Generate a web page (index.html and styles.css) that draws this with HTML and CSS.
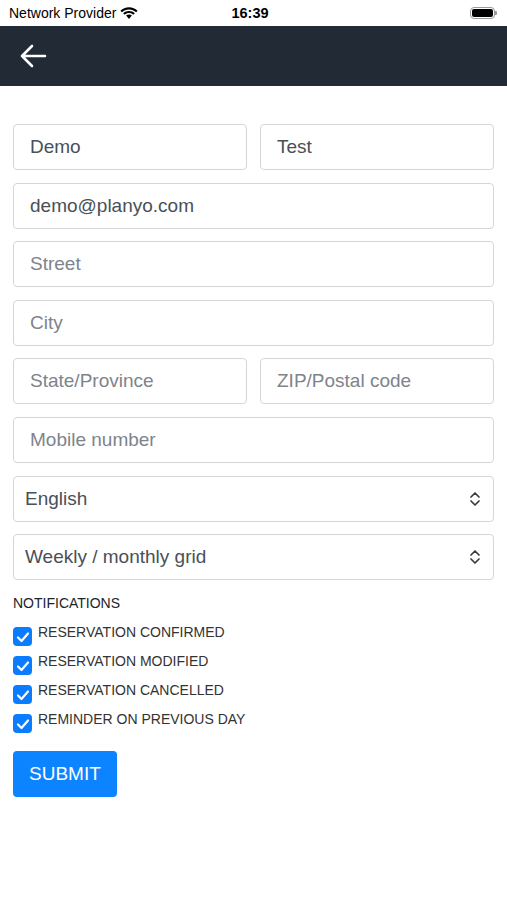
FILE: index.html
```html
<!DOCTYPE html>
<html lang="en">
<head>
    <meta charset="UTF-8">
    <meta name="viewport" content="width=device-width, initial-scale=1.0">
    <title>Profile</title>
    <link rel="stylesheet" href="styles.css">
</head>
<body>
    <div class="status-bar">
        <div class="carrier">
            Network Provider
            <svg class="wifi" width="18" height="13" viewBox="0 0 17 12">
                <path d="M8.5 2.2c2.6 0 5 1 6.8 2.7l1.3-1.4C14.5 1.4 11.6.2 8.5.2S2.5 1.4.4 3.5l1.3 1.4C3.5 3.2 5.9 2.2 8.5 2.2z" fill="#000"/>
                <path d="M8.5 5.6c1.6 0 3 .6 4.2 1.6l1.3-1.4C12.5 4.4 10.6 3.6 8.5 3.6S4.5 4.4 3 5.8l1.3 1.4c1.2-1 2.6-1.6 4.2-1.6z" fill="#000"/>
                <path d="M8.5 7c-1 0-1.9.4-2.7 1l2.7 3.2 2.7-3.2c-.8-.6-1.7-1-2.7-1z" fill="#000"/>
            </svg>
        </div>
        <div class="clock">16:39</div>
        <div class="battery">
            <span class="battery-body"><span class="battery-fill"></span></span>
            <span class="battery-tip"></span>
        </div>
    </div>

    <div class="nav-bar">
        <svg class="back" width="28" height="24" viewBox="0 0 28 24">
            <path d="M26 12H3M13 2L3 12l10 10" fill="none" stroke="#fff" stroke-width="2.6" stroke-linecap="round" stroke-linejoin="round"/>
        </svg>
    </div>

    <form class="form">
        <div class="row">
            <input class="field" type="text" value="Demo">
            <input class="field" type="text" value="Test">
        </div>
        <input class="field" type="text" value="demo@planyo.com">
        <input class="field" type="text" placeholder="Street">
        <input class="field" type="text" placeholder="City">
        <div class="row">
            <input class="field" type="text" placeholder="State/Province">
            <input class="field" type="text" placeholder="ZIP/Postal code">
        </div>
        <input class="field" type="text" placeholder="Mobile number">
        <div class="select">
            <span>English</span>
            <svg width="12" height="16" viewBox="0 0 12 16">
                <path d="M2 6l4-4 4 4M2 10l4 4 4-4" fill="none" stroke="#3a3a3a" stroke-width="1.7" stroke-linecap="round" stroke-linejoin="round"/>
            </svg>
        </div>
        <div class="select">
            <span>Weekly / monthly grid</span>
            <svg width="12" height="16" viewBox="0 0 12 16">
                <path d="M2 6l4-4 4 4M2 10l4 4 4-4" fill="none" stroke="#3a3a3a" stroke-width="1.7" stroke-linecap="round" stroke-linejoin="round"/>
            </svg>
        </div>

        <div class="section-title">NOTIFICATIONS</div>
        <label class="check"><span class="box"><svg width="14" height="12" viewBox="0 0 14 12"><path d="M2 6.5l3.5 3.5L12 2.5" fill="none" stroke="#fff" stroke-width="2.2" stroke-linecap="round" stroke-linejoin="round"/></svg></span>RESERVATION CONFIRMED</label>
        <label class="check"><span class="box"><svg width="14" height="12" viewBox="0 0 14 12"><path d="M2 6.5l3.5 3.5L12 2.5" fill="none" stroke="#fff" stroke-width="2.2" stroke-linecap="round" stroke-linejoin="round"/></svg></span>RESERVATION MODIFIED</label>
        <label class="check"><span class="box"><svg width="14" height="12" viewBox="0 0 14 12"><path d="M2 6.5l3.5 3.5L12 2.5" fill="none" stroke="#fff" stroke-width="2.2" stroke-linecap="round" stroke-linejoin="round"/></svg></span>RESERVATION CANCELLED</label>
        <label class="check"><span class="box"><svg width="14" height="12" viewBox="0 0 14 12"><path d="M2 6.5l3.5 3.5L12 2.5" fill="none" stroke="#fff" stroke-width="2.2" stroke-linecap="round" stroke-linejoin="round"/></svg></span>REMINDER ON PREVIOUS DAY</label>

        <button class="btn" type="button">SUBMIT</button>
    </form>
</body>
</html>
```

FILE: styles.css
```css
* {
    margin: 0;
    padding: 0;
    box-sizing: border-box;
}

body {
    font-family: "Liberation Sans", Arial, sans-serif;
    background: #fff;
    color: #212529;
    width: 507px;
}

.status-bar {
    height: 26px;
    display: flex;
    align-items: center;
    justify-content: space-between;
    padding: 0 9px;
    font-size: 14px;
    color: #000;
}

.carrier {
    display: flex;
    align-items: center;
    gap: 4px;
    width: 190px;
}

.clock {
    font-weight: bold;
    font-size: 14.5px;
    margin-right: 7px;
}

.battery {
    width: 190px;
    display: flex;
    justify-content: flex-end;
    align-items: center;
    padding-right: 1px;
}

.battery-body {
    width: 25px;
    height: 12px;
    border: 1px solid #999;
    border-radius: 4px;
    padding: 1px;
    display: flex;
}

.battery-fill {
    flex: 1;
    background: #000;
    border-radius: 2px;
}

.battery-tip {
    width: 2px;
    height: 4px;
    background: #999;
    border-radius: 0 1px 1px 0;
}

.nav-bar {
    height: 60px;
    background: #212a35;
    display: flex;
    align-items: center;
    padding-left: 19px;
}

.form {
    padding: 38px 13px 0;
    display: flex;
    flex-direction: column;
    gap: 12.6px;
}

.row {
    display: flex;
    gap: 13px;
}

.row .field {
    flex: 1;
    min-width: 0;
}

.field {
    height: 46px;
    width: 100%;
    border: 1px solid #d4d7da;
    border-radius: 4px;
    padding: 0 16px;
    font-family: inherit;
    font-size: 19px;
    color: #495057;
    background: #fff;
}

.field::placeholder {
    color: #7d848b;
}

.select {
    height: 46px;
    border: 1px solid #d4d7da;
    border-radius: 4px;
    padding: 0 12px 0 11px;
    display: flex;
    align-items: center;
    justify-content: space-between;
    font-size: 19px;
    color: #495057;
}

.section-title {
    font-size: 14px;
    color: #212529;
    margin-top: 2px;
    margin-bottom: 2px;
}

.check {
    display: flex;
    align-items: flex-start;
    gap: 6px;
    font-size: 14px;
    color: #333;
    height: 20px;
    margin-bottom: -3.6px;
    line-height: 14px;
}

.box {
    width: 19px;
    height: 19px;
    border-radius: 4px;
    background: #0a7cff;
    display: flex;
    align-items: center;
    justify-content: center;
    margin-top: 2px;
    flex-shrink: 0;
}

.btn {
    margin-top: 10px;
    align-self: flex-start;
    height: 46px;
    padding: 0 16px;
    background: #0d84ff;
    color: #fff;
    border: none;
    border-radius: 4px;
    font-family: inherit;
    font-size: 19px;
}
```
